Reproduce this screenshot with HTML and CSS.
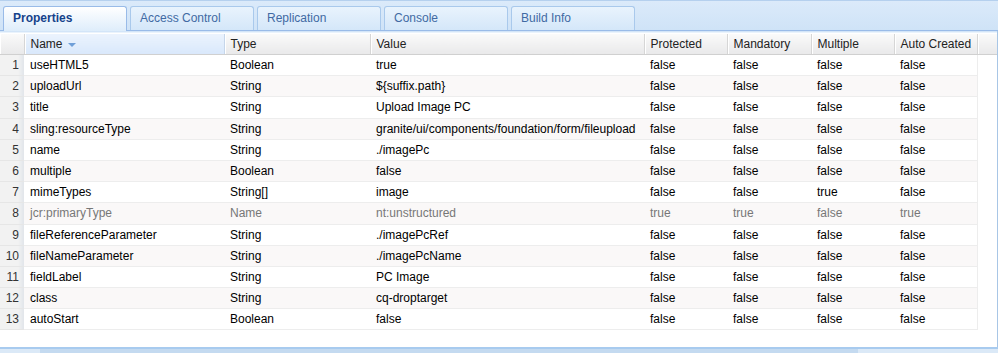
FILE: index.html
```html
<!DOCTYPE html>
<html lang="en">
<head>
    <meta charset="UTF-8">
    <meta name="viewport" content="width=device-width, initial-scale=1.0">
    <title>Properties</title>
    <link rel="stylesheet" href="styles.css">
</head>
<body>
    <div class="panel">
        <div class="tab-strip">
            <div class="tab active">Properties</div>
            <div class="tab">Access Control</div>
            <div class="tab">Replication</div>
            <div class="tab">Console</div>
            <div class="tab">Build Info</div>
        </div>
        <div class="grid-body">
            <table class="grid">
                <colgroup>
                    <col class="c-num">
                    <col class="c-name">
                    <col class="c-type">
                    <col class="c-value">
                    <col class="c-flag">
                    <col class="c-flag2">
                    <col class="c-flag">
                    <col class="c-flag">
                    <col>
                </colgroup>
                <thead>
                    <tr>
                        <th class="num"></th>
                        <th class="sorted">Name <span class="sort-arrow"></span></th>
                        <th>Type</th>
                        <th>Value</th>
                        <th>Protected</th>
                        <th>Mandatory</th>
                        <th>Multiple</th>
                        <th>Auto Created</th>
                        <th class="filler"></th>
                    </tr>
                </thead>
                <tbody>
                    <tr><td class="num">1</td><td>useHTML5</td><td>Boolean</td><td>true</td><td>false</td><td>false</td><td>false</td><td>false</td><td class="filler"></td></tr>
                    <tr><td class="num">2</td><td>uploadUrl</td><td>String</td><td>${suffix.path}</td><td>false</td><td>false</td><td>false</td><td>false</td><td class="filler"></td></tr>
                    <tr><td class="num">3</td><td>title</td><td>String</td><td>Upload Image PC</td><td>false</td><td>false</td><td>false</td><td>false</td><td class="filler"></td></tr>
                    <tr><td class="num">4</td><td>sling:resourceType</td><td>String</td><td>granite/ui/components/foundation/form/fileupload</td><td>false</td><td>false</td><td>false</td><td>false</td><td class="filler"></td></tr>
                    <tr><td class="num">5</td><td>name</td><td>String</td><td>./imagePc</td><td>false</td><td>false</td><td>false</td><td>false</td><td class="filler"></td></tr>
                    <tr><td class="num">6</td><td>multiple</td><td>Boolean</td><td>false</td><td>false</td><td>false</td><td>false</td><td>false</td><td class="filler"></td></tr>
                    <tr><td class="num">7</td><td>mimeTypes</td><td>String[]</td><td>image</td><td>false</td><td>false</td><td>true</td><td>false</td><td class="filler"></td></tr>
                    <tr class="protected"><td class="num">8</td><td>jcr:primaryType</td><td>Name</td><td>nt:unstructured</td><td>true</td><td>true</td><td>false</td><td>true</td><td class="filler"></td></tr>
                    <tr><td class="num">9</td><td>fileReferenceParameter</td><td>String</td><td>./imagePcRef</td><td>false</td><td>false</td><td>false</td><td>false</td><td class="filler"></td></tr>
                    <tr><td class="num">10</td><td>fileNameParameter</td><td>String</td><td>./imagePcName</td><td>false</td><td>false</td><td>false</td><td>false</td><td class="filler"></td></tr>
                    <tr><td class="num">11</td><td>fieldLabel</td><td>String</td><td>PC Image</td><td>false</td><td>false</td><td>false</td><td>false</td><td class="filler"></td></tr>
                    <tr><td class="num">12</td><td>class</td><td>String</td><td>cq-droptarget</td><td>false</td><td>false</td><td>false</td><td>false</td><td class="filler"></td></tr>
                    <tr><td class="num">13</td><td>autoStart</td><td>Boolean</td><td>false</td><td>false</td><td>false</td><td>false</td><td>false</td><td class="filler"></td></tr>
                </tbody>
            </table>
        </div>
        <div class="bottom-bar"></div>
    </div>
</body>
</html>
```

FILE: styles.css
```css
body {
    margin: 0;
    font-family: "Liberation Sans", Arial, sans-serif;
    font-size: 12px;
    color: #000;
    background-color: #fff;
}
.panel {
    width: 998px;
    height: 353px;
    display: flex;
    flex-direction: column;
    overflow: hidden;
}
.tab-strip {
    height: 26px;
    padding: 3px 0 0 3px;
    display: flex;
    align-items: flex-end;
    gap: 3px;
    background: linear-gradient(#dbeafa, #cfe3f7);
    border-top: 1px solid #b5d0ee;
    border-bottom: 1px solid #99bbe8;
    box-shadow: 0 1px 0 #d3e5f8, 0 2px 0 #eaf3fc;
}
.tab {
    width: 113px;
    height: 23px;
    padding-left: 9px;
    line-height: 22px;
    color: #416aa3;
    border: 1px solid #a9c9ec;
    border-bottom: none;
    border-radius: 3px 3px 0 0;
    background: linear-gradient(#e9f3fd, #d4e7f9);
    white-space: nowrap;
}
.tab.active {
    font-weight: bold;
    color: #15428b;
    background: linear-gradient(#ffffff, #deedfb);
    border-color: #99bbe8;
    height: 24px;
    margin-bottom: -1px;
}
.grid-body {
    flex: 1;
    padding-top: 3px;
    border-right: 1px solid #a8c6e6;
}
.grid {
    width: 100%;
    border-collapse: collapse;
    table-layout: fixed;
}
.c-num { width: 24px; }
.c-name { width: 200px; }
.c-type { width: 146px; }
.c-value { width: 274px; }
.c-flag { width: 83px; }
.c-flag2 { width: 84px; }
.grid th {
    height: 20px;
    padding: 0 6px;
    text-align: left;
    font-weight: normal;
    color: #222;
    background: linear-gradient(#fafafa, #e9e9ea);
    border-right: 1px solid #d6d6d6;
    border-bottom: 1px solid #d0d0d0;
    box-shadow: inset 1px 0 0 #fff;
    white-space: nowrap;
}
.grid th.sorted {
    background: linear-gradient(#ebf3fd, #d9e8fb);
    border-right-color: #c6d6ea;
}
.grid th.filler {
    border-right: none;
}
.sort-arrow {
    display: inline-block;
    width: 0;
    height: 0;
    margin-left: 2px;
    vertical-align: middle;
    border-left: 4px solid transparent;
    border-right: 4px solid transparent;
    border-top: 4px solid #6f9fd8;
}
.grid td {
    height: 20.2px;
    padding: 0 6px;
    border-bottom: 1px solid #ededed;
    white-space: nowrap;
    overflow: hidden;
}
.grid tbody tr:nth-child(even) td {
    background-color: #faf8f8;
}
.grid td.num,
.grid tbody tr:nth-child(even) td.num {
    padding: 0 5px 0 0;
    text-align: right;
    color: #333;
    background: linear-gradient(to right, #f2f2f2 75%, #e1e5ea);
    border-bottom-color: #e6e6e6;
}
.grid td:nth-child(8) {
    border-right: 1px solid #ededed;
}
.grid td.filler,
.grid tbody tr:nth-child(even) td.filler {
    background: none;
    border-bottom: none;
}
.grid tr.protected td {
    color: #777;
}
.grid tr.protected td.num {
    color: #333;
}
.bottom-bar {
    height: 4px;
    border-top: 2px solid #a8cbef;
    background: linear-gradient(to right, #dbe9f7 4%, #c4daf0 4%, #c4daf0 86%, #dbe9f7 86%);
}
```
